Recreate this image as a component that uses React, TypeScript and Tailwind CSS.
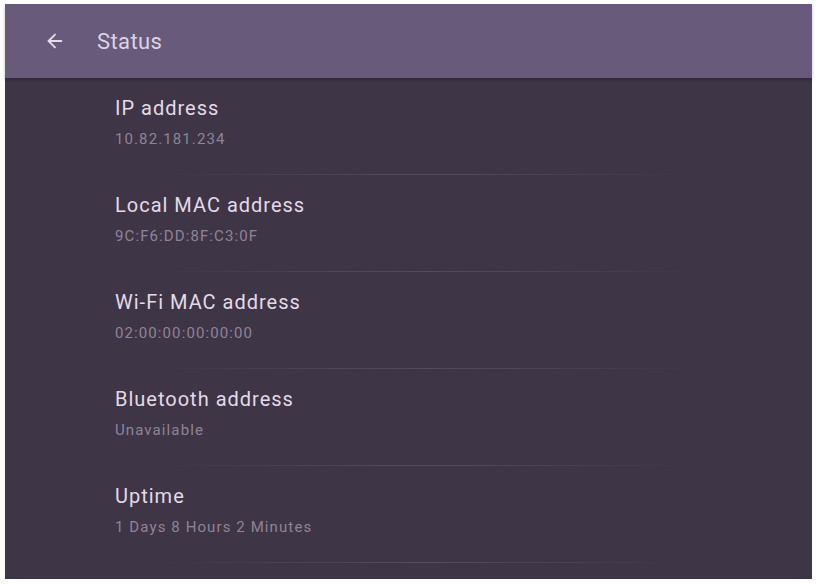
import React from 'react';
import { ArrowLeft } from 'lucide-react';

const items = [
  { title: 'IP address', value: '10.82.181.234' },
  { title: 'Local MAC address', value: '9C:F6:DD:8F:C3:0F' },
  { title: 'Wi-Fi MAC address', value: '02:00:00:00:00:00' },
  { title: 'Bluetooth address', value: 'Unavailable' },
  { title: 'Uptime', value: '1 Days 8 Hours 2 Minutes' },
];

export default function App() {
  return (
    <div
      className="w-[818px] h-[584px] bg-white pt-[4px] pl-[5px] overflow-hidden"
      style={{ fontFamily: 'Roboto, "Noto Sans", sans-serif' }}
    >
      <div className="w-[807px] h-[575px] bg-[#3e3546] flex flex-col">
        {/* Header */}
        <div className="h-[74px] shrink-0 bg-[#675a7a] flex items-center pl-[39px] shadow-[0_2px_3px_rgba(0,0,0,0.25)]">
          <ArrowLeft className="w-[22px] h-[22px] text-[#e6dced]" strokeWidth={2} />
          <span className="ml-[31px] text-[22px] tracking-[0.4px] text-[#ddd2e4]">Status</span>
        </div>

        {/* Status list */}
        <div className="flex flex-col">
          {items.map((item) => (
            <div key={item.title} className="flex flex-col">
              <div className="pl-[110px] pt-[18px] pb-[26px]">
                <div className="text-[20px] leading-[24px] tracking-[1px] text-[#e3dbe8]">{item.title}</div>
                <div className="mt-[10px] text-[15px] leading-[18px] tracking-[1.1px] text-[#8d8597]">{item.value}</div>
              </div>
              <div className="ml-[155px] w-[530px] h-px bg-gradient-to-r from-transparent via-[#574d62] to-transparent" />
            </div>
          ))}
        </div>
      </div>
    </div>
  );
}
